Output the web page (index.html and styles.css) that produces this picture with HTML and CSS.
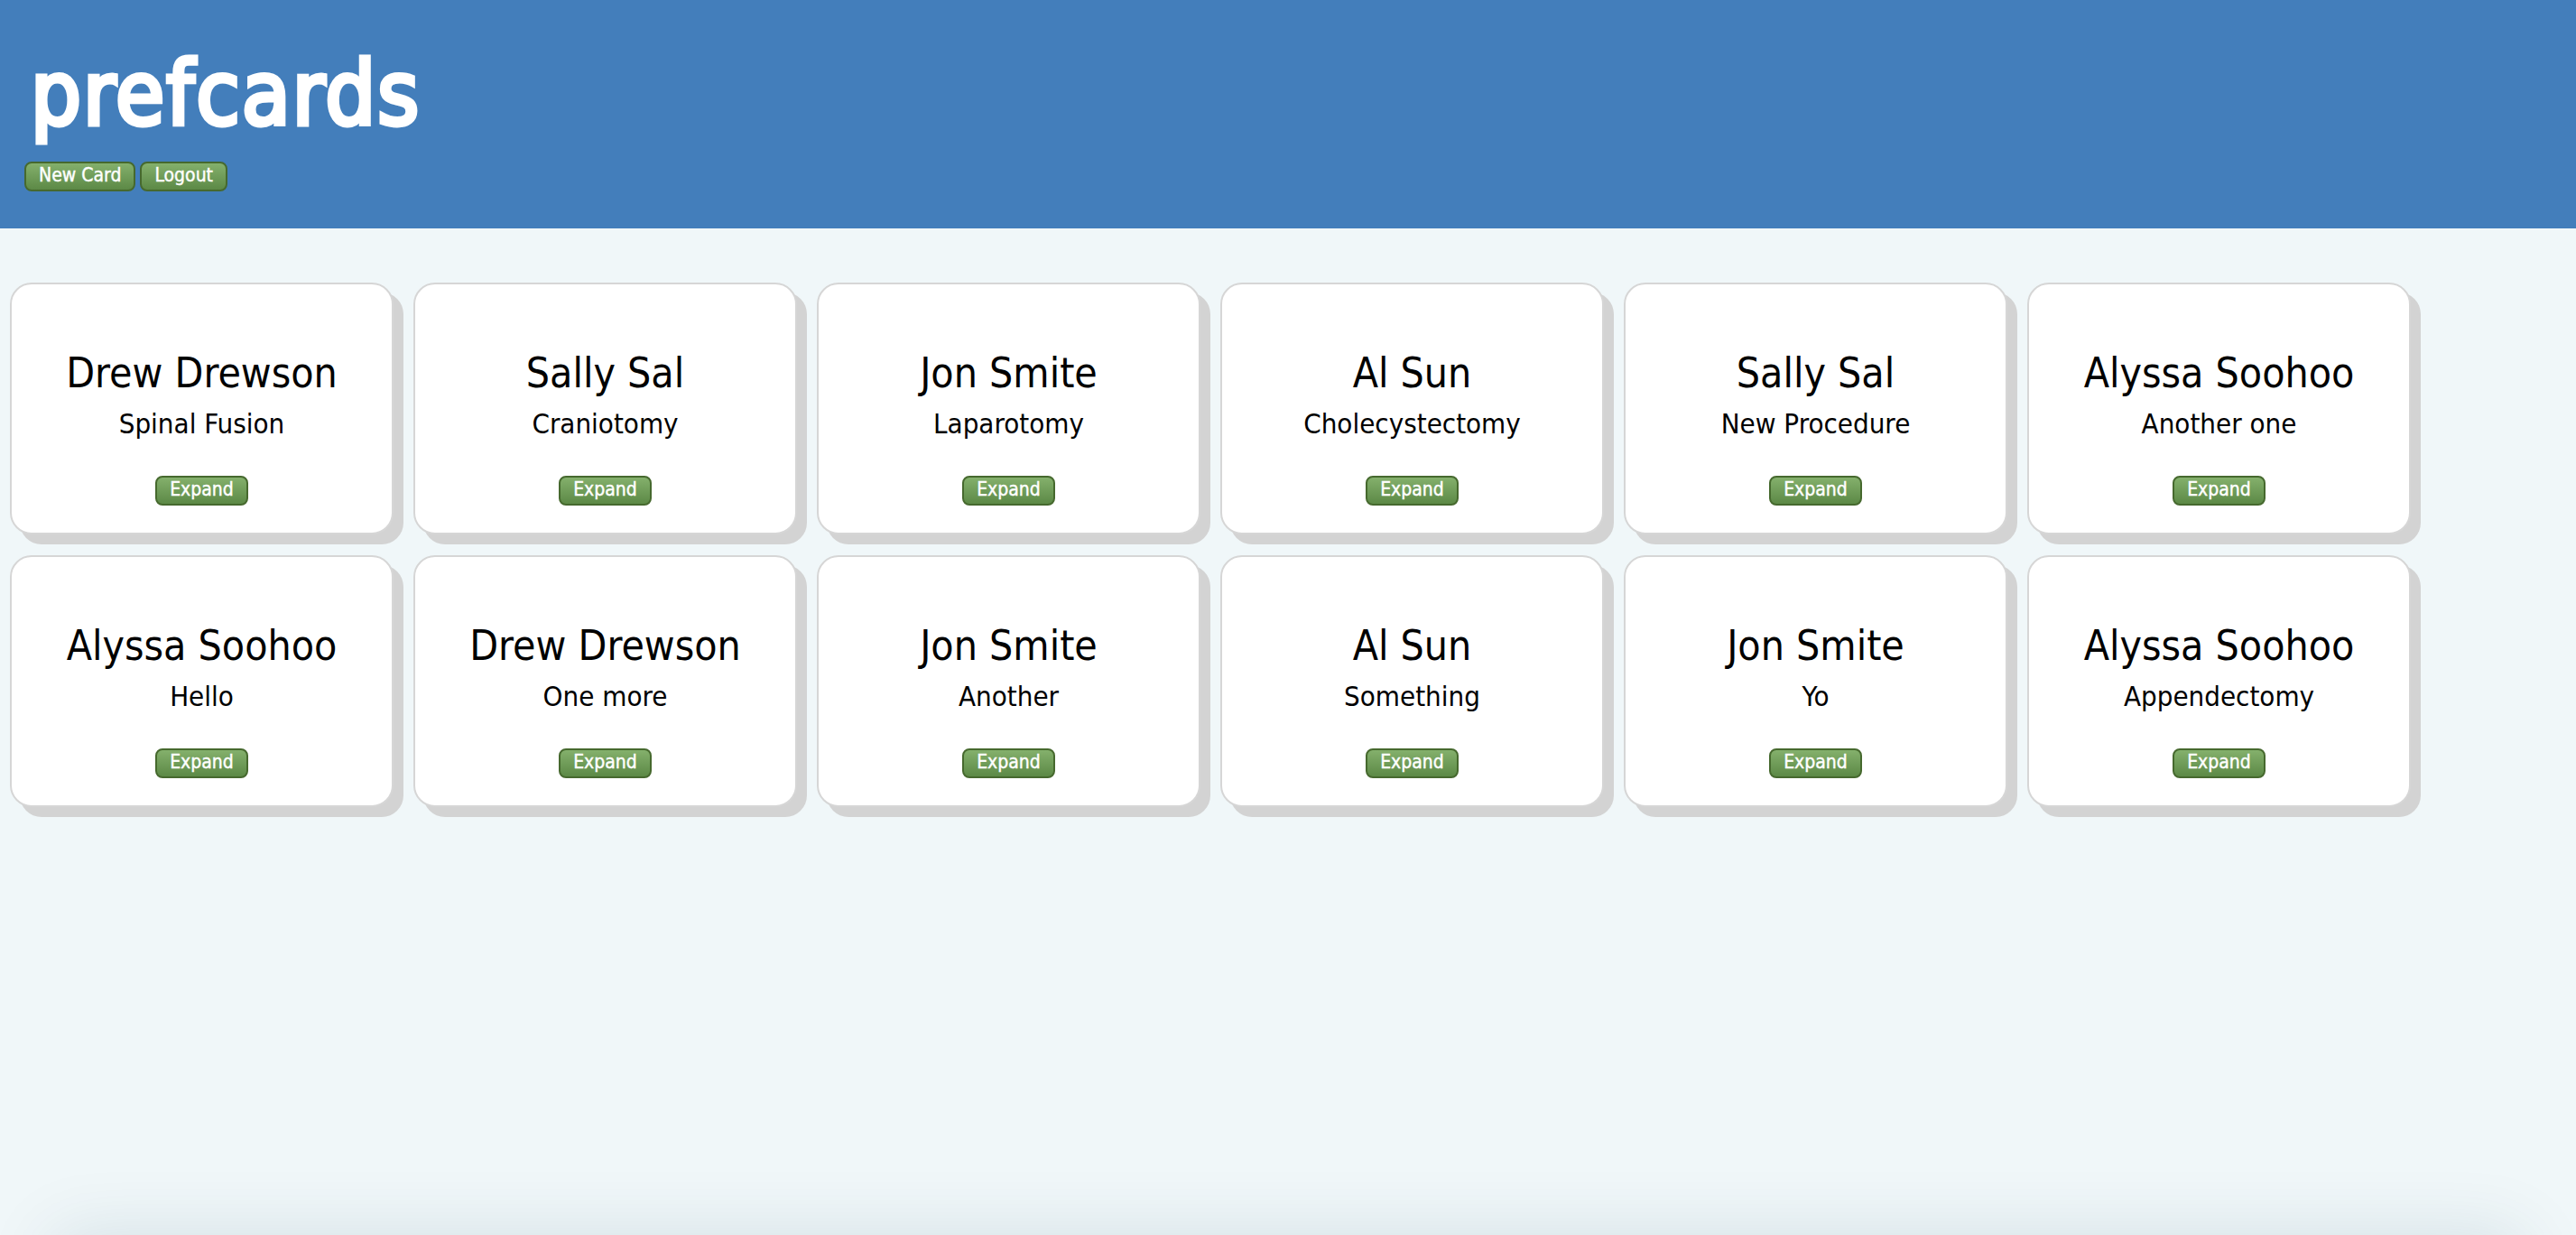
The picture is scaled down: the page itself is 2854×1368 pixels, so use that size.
FILE: index.html
```html
<!DOCTYPE html>
<html lang="en">
<head>
<meta charset="utf-8">
<title>prefcards</title>
<link rel="stylesheet" href="styles.css">
</head>
<body>
<header class="site-header">
  <h1 class="brand">prefcards</h1>
  <nav class="header-actions">
    <button class="btn">New Card</button>
    <button class="btn">Logout</button>
  </nav>
</header>
<main class="card-grid">
  <article class="card"><h2 class="card-name">Drew Drewson</h2><p class="card-proc">Spinal Fusion</p><button class="btn">Expand</button></article>
  <article class="card"><h2 class="card-name">Sally Sal</h2><p class="card-proc">Craniotomy</p><button class="btn">Expand</button></article>
  <article class="card"><h2 class="card-name">Jon Smite</h2><p class="card-proc">Laparotomy</p><button class="btn">Expand</button></article>
  <article class="card"><h2 class="card-name">Al Sun</h2><p class="card-proc">Cholecystectomy</p><button class="btn">Expand</button></article>
  <article class="card"><h2 class="card-name">Sally Sal</h2><p class="card-proc">New Procedure</p><button class="btn">Expand</button></article>
  <article class="card"><h2 class="card-name">Alyssa Soohoo</h2><p class="card-proc">Another one</p><button class="btn">Expand</button></article>
  <article class="card"><h2 class="card-name">Alyssa Soohoo</h2><p class="card-proc">Hello</p><button class="btn">Expand</button></article>
  <article class="card"><h2 class="card-name">Drew Drewson</h2><p class="card-proc">One more</p><button class="btn">Expand</button></article>
  <article class="card"><h2 class="card-name">Jon Smite</h2><p class="card-proc">Another</p><button class="btn">Expand</button></article>
  <article class="card"><h2 class="card-name">Al Sun</h2><p class="card-proc">Something</p><button class="btn">Expand</button></article>
  <article class="card"><h2 class="card-name">Jon Smite</h2><p class="card-proc">Yo</p><button class="btn">Expand</button></article>
  <article class="card"><h2 class="card-name">Alyssa Soohoo</h2><p class="card-proc">Appendectomy</p><button class="btn">Expand</button></article>
</main>
<div class="bottom-shade"></div>
</body>
</html>
```

FILE: styles.css
```css
html, body {
  margin: 0;
  padding: 0;
}

body {
  background: #f0f7f9;
  font-family: "DejaVu Sans Condensed", "DejaVu Sans", sans-serif;
  color: #000;
  min-height: 1368px;
  overflow: hidden;
}

.site-header {
  background: #437ebb;
  padding: 55px 27px 41px;
  height: 253px;
  box-sizing: border-box;
}

.brand {
  margin: 0 0 25px 7px;
  font-size: 98px;
  line-height: 99px;
  font-weight: normal;
  letter-spacing: 2px;
  color: #fff;
  -webkit-text-stroke: 5px #fff;
}

.header-actions {
  display: flex;
  gap: 5px;
}

.btn {
  font-family: "DejaVu Sans Condensed", "DejaVu Sans", sans-serif;
  font-size: 21px;
  line-height: 26px;
  padding: 0 14px 3px;
  height: 33px;
  box-sizing: border-box;
  border: 2px solid #46692e;
  border-radius: 8px;
  background: linear-gradient(#84b06c, #5c8946);
  color: #fff;
  -webkit-text-stroke: 0.4px #fff;
  cursor: pointer;
}

.card-grid {
  display: grid;
  grid-template-columns: repeat(6, 425px);
  column-gap: 22px;
  row-gap: 23px;
  padding: 60px 0 0 11px;
}

.card {
  box-sizing: border-box;
  height: 279px;
  background: #fff;
  border: 2px solid #d6d6d6;
  border-radius: 24px;
  box-shadow: 11px 11px 0 #d3d3d3;
  padding: 75px 10px 30px;
  display: flex;
  flex-direction: column;
  align-items: center;
  text-align: center;
}

.card-name {
  margin: 0;
  font-size: 46px;
  line-height: 46px;
  font-weight: normal;
}

.card-proc {
  margin: 18px 0 42px;
  font-size: 31px;
  line-height: 31px;
}

.bottom-shade {
  position: fixed;
  left: 60px;
  right: 60px;
  bottom: -90px;
  height: 90px;
  box-shadow: 0 0 80px rgba(20, 60, 80, 0.12);
}
```
